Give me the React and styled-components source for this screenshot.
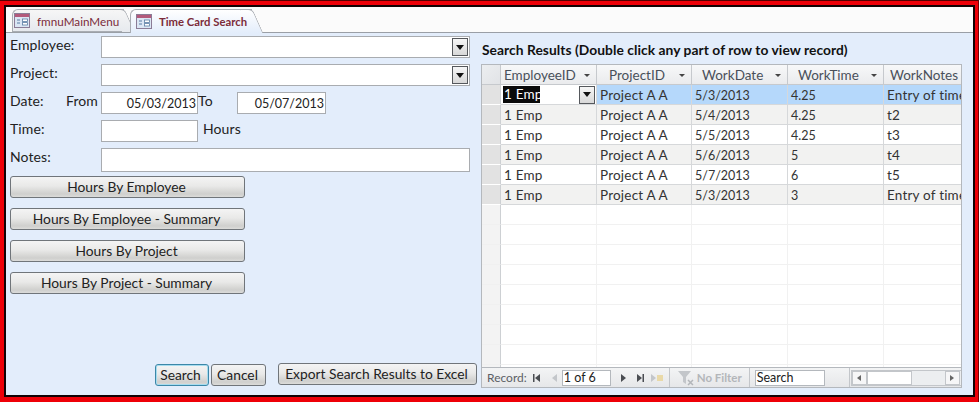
import React from 'react';
import styled, { createGlobalStyle } from 'styled-components';

const Global = createGlobalStyle`
  html, body { margin: 0; padding: 0; background: #e8000a; }
  * { box-sizing: border-box; }
`;

const Frame = styled.div`
  width: 979px;
  height: 402px;
  background: #ee0008;
  padding: 4px 3px 5px 4px;
  font-family: Lato, "Noto Sans", sans-serif;
  font-size: 14px;
  color: #222;
  border-top: 1px solid #500;
  border-right: 1px solid #700;
`;

const Window = styled.div`
  width: 971px;
  height: 392px;
  border: 2px solid #120204;
  display: flex;
  flex-direction: column;
  background: #e3edfb;
  overflow: hidden;
`;

const TabStrip = styled.div`
  height: 26px;
  flex: none;
  display: flex;
  align-items: flex-end;
  gap: 2px;
  padding-left: 6px;
  background: #fbfbfb;
  border-bottom: 1px solid #9a9fa6;
`;

const Tab = styled.div`
  position: relative;
  height: ${p => (p.$active ? 24 : 23)}px;
  width: ${p => (p.$active ? 122 : 112)}px;
  margin-bottom: ${p => (p.$active ? -1 : 0)}px;
  margin-right: ${p => (p.$active ? 0 : 4)}px;
  display: flex;
  align-items: center;
  gap: ${p => (p.$active ? 7 : 7)}px;
  padding-left: ${p => (p.$active ? 5 : 1)}px;
  font-size: ${p => (p.$active ? 11.3 : 11.7)}px;
  font-weight: ${p => (p.$active ? 700 : 400)};
  white-space: nowrap;
  color: #7b2b3a;
  background: ${p => (p.$active ? 'linear-gradient(#fff, #e3edfb)' : 'linear-gradient(#f6f6f6, #e6e9ee)')};
  border: 1px solid #a9adb3;
  border-right: 0;
  border-bottom: ${p => (p.$active ? '0' : '1px solid #a9adb3')};
  border-top-left-radius: 6px;
  z-index: ${p => (p.$active ? 2 : 1)};

  &::after {
    content: '';
    position: absolute;
    top: -1px;
    bottom: ${p => (p.$active ? 0 : -1)}px;
    right: -6px;
    width: 12px;
    background: inherit;
    border-right: 1px solid #a9adb3;
    border-top: 1px solid #a9adb3;
    border-top-right-radius: 5px;
    transform: skewX(24deg);
    z-index: -1;
  }
`;

const Body = styled.div`
  flex: 1;
  display: flex;
  min-height: 0;
`;

const FormPanel = styled.div`
  width: 475px;
  flex: none;
  display: flex;
  flex-direction: column;
  padding: 3px 0 9px 4px;
`;

const FieldRow = styled.div`
  display: flex;
  align-items: flex-start;
  height: ${p => p.$height || 28}px;
`;

const Label = styled.div`
  width: 56px;
  height: 20px;
  line-height: 17px;
  font-size: 14px;
  letter-spacing: 0.1px;
  flex: none;
`;

const SubLabel = styled(Label)`
  width: ${p => p.$width}px;
  padding-left: ${p => p.$pad || 0}px;
`;

const Input = styled.div`
  width: ${p => p.$width}px;
  height: ${p => p.$height || 22}px;
  background: #fff;
  border: 1px solid #a9acb0;
  flex: none;
  display: flex;
  align-items: center;
  justify-content: flex-end;
  padding-right: 1px;
  font-size: 12.5px;
`;

const ComboArrow = styled.div`
  width: 16px;
  height: 18px;
  border: 1px solid #55585c;
  background: linear-gradient(#f6f6f6, #d8d8d8);
  display: flex;
  align-items: center;
  justify-content: center;

  &::after {
    content: '';
    border: 4px solid transparent;
    border-top: 5px solid #111;
    border-bottom: 0;
  }
`;

const Gutter = styled.div`
  width: 35px;
  flex: none;
`;

const ReportList = styled.div`
  display: flex;
  flex-direction: column;
  gap: 10px;
  margin-top: 4px;
`;

const Button = styled.div`
  width: ${p => p.$width || 235}px;
  height: 22px;
  margin-left: ${p => p.$ml || 0}px;
  margin-top: ${p => p.$mt || 0}px;
  padding-bottom: 2px;
  padding-right: ${p => p.$shift || 0}px;
  border: 1px solid ${p => (p.$focused ? '#3c87a8' : '#70757a')};
  border-radius: 3px;
  background: linear-gradient(#f4f4f4 0%, #e9e9e8 45%, #cfcfcd 85%, #dcdcda 100%);
  box-shadow: ${p => (p.$focused ? 'inset 0 0 0 1px #a6dcef' : 'none')};
  display: flex;
  align-items: center;
  justify-content: center;
  font-size: 13.8px;
  flex: none;
`;

const BottomButtons = styled.div`
  margin-top: auto;
  display: flex;
  align-items: flex-start;
  padding-left: 145px;
`;

const ResultsPanel = styled.div`
  flex: 1;
  display: flex;
  flex-direction: column;
  min-width: 0;
  padding-right: 11px;
`;

const ResultsTitle = styled.div`
  height: 31px;
  padding: 8px 0 0 1px;
  font-size: 13.8px;
  letter-spacing: 0.05px;
  font-weight: 700;
  color: #111;
  white-space: nowrap;
`;

const Sheet = styled.div`
  width: 481px;
  height: 324px;
  background: #fff;
  border: 1px solid #b4b8bd;
  display: flex;
  flex-direction: column;
  overflow: hidden;
`;

const SheetRow = styled.div`
  display: grid;
  grid-template-columns: 19px 96px 95px 96px 96px 78px;
  height: 20px;
  flex: none;
  background: ${p => p.$bg || '#fff'};
`;

const HeaderCell = styled.div`
  display: flex;
  align-items: center;
  justify-content: space-between;
  padding: 0 6px 0 ${p => p.$pad}px;
  color: #49505a;
  font-size: 13.5px;
  background: linear-gradient(#f7f8f9, #eaebed);
  border-right: 1px solid #c6c9cd;
  border-bottom: 1px solid #c6c9cd;
  white-space: nowrap;
  overflow: hidden;

  &::after {
    content: ${p => (p.$noArrow ? 'none' : "''")};
    border: 3px solid transparent;
    border-top: 3px solid #444;
    border-bottom: 0;
    margin-top: 2px;
  }
`;

const Corner = styled.div`
  background: linear-gradient(135deg, #eceef0, #e1e3e6);
  border-right: 1px solid #c6c9cd;
  border-bottom: 1px solid #c6c9cd;
`;

const Selector = styled.div`
  background: ${p => (p.$empty ? '#f3f3f3' : '#e2e2e2')};
  border-right: 1px solid #cdd0d3;
  border-bottom: 1px solid ${p => (p.$empty ? '#f0f0f0' : '#fff')};
`;

const Cell = styled.div`
  display: flex;
  align-items: center;
  padding: 1px 0 0 3px;
  border-right: 1px solid ${p => (p.$empty ? '#f1f1f1' : '#d6d8da')};
  border-bottom: 1px solid ${p => (p.$empty ? '#f1f1f1' : '#d6d8da')};
  font-size: ${p => (p.$num ? 12.5 : 13.5)}px;
  letter-spacing: ${p => (p.$num ? 0 : 0.2)}px;
  color: #333;
  white-space: nowrap;
  overflow: hidden;
`;

const ActiveCell = styled(Cell)`
  background: #fff;
  justify-content: space-between;
  padding: 0 1px 0 2px;
  color: #fff;
`;

const Highlighted = styled.span`
  background: #0a0a0a;
  width: 37px;
  height: 17px;
  line-height: 17px;
  padding-left: 1px;
`;

const Filler = styled.div`
  flex: 1;
  min-height: 0;
  overflow: hidden;
`;

const NavBar = styled.div`
  height: 20px;
  flex: none;
  display: flex;
  align-items: center;
  background: linear-gradient(#f3f4f5, #e6e7e9);
  border-top: 1px solid #b4b8bd;
  color: #5c6066;
  font-size: 12px;
`;

const NavLabel = styled.span`
  margin: 0 5px 0 5px;
`;

const NavInput = styled.div`
  width: ${p => p.$width}px;
  height: 16px;
  margin-left: ${p => p.$ml || 0}px;
  background: #fff;
  border: 1px solid #b4b8bd;
  color: #222;
  padding-left: 1px;
  line-height: 14px;
  font-size: 12.5px;
  flex: none;
`;

const NavIcon = styled.svg`
  width: ${p => p.$w || 10}px;
  height: ${p => p.$h || 10}px;
  margin-left: ${p => p.$ml || 0}px;
  flex: none;
  fill: ${p => (p.$dim ? '#c3c6ca' : '#4a4d52')};
`;

const NavDivider = styled.div`
  width: 1px;
  height: 19px;
  background: #c3c6ca;
  margin-left: ${p => p.$ml || 0}px;
  margin-right: ${p => p.$mr || 0}px;
  flex: none;
`;

const NoFilter = styled.span`
  color: #b3b6ba;
  font-weight: 700;
  font-size: 11.5px;
  margin-left: 2px;
  white-space: nowrap;
  width: 42px;
  flex: none;
  overflow: visible;
`;

const ScrollTrack = styled.div`
  width: 111px;
  height: 16px;
  margin-left: 1px;
  flex: none;
  display: flex;
  align-items: center;
  background: #eceef0;
  border: 1px solid #c3c6ca;
`;

const ScrollButton = styled.div`
  width: 15px;
  height: 14px;
  flex: none;
  display: flex;
  align-items: center;
  justify-content: center;
  background: #f6f6f7;
  border: 1px solid #c3c6ca;
  margin-left: ${p => (p.$auto ? 'auto' : '0')};
  margin-right: ${p => (p.$auto ? '1px' : '0')};

  &::after {
    content: '';
    border: 3.5px solid transparent;
    border-left: ${p => (p.$dir === 'right' ? '4px solid #666' : '0')};
    border-right: ${p => (p.$dir === 'left' ? '4px solid #666' : '0')};
  }
`;

const ScrollThumb = styled.div`
  width: 45px;
  height: 14px;
  background: #fff;
  border: 1px solid #c3c6ca;
  flex: none;
`;

const FormIcon = () => (
  <svg width="16" height="15" viewBox="0 0 16 15">
    <rect x="0.5" y="0.5" width="15" height="14" fill="#dbe6f4" stroke="#8b7c96" />
    <rect x="1" y="1" width="14" height="3" fill="#b35a7c" />
    <path d="M3 7h3M3 10h3" stroke="#5a7da3" strokeWidth="1" />
    <rect x="8.5" y="6" width="5" height="2.4" fill="#fff" stroke="#5a7da3" strokeWidth="0.8" />
    <rect x="8.5" y="9.6" width="5" height="2.4" fill="#fff" stroke="#5a7da3" strokeWidth="0.8" />
  </svg>
);

const rows = [
  ['5/3/2013', '4.25', 'Entry of time'],
  ['5/4/2013', '4.25', 't2'],
  ['5/5/2013', '4.25', 't3'],
  ['5/6/2013', '5', 't4'],
  ['5/7/2013', '6', 't5'],
  ['5/3/2013', '3', 'Entry of time'],
];

const reports = ['Hours By Employee', 'Hours By Employee - Summary', 'Hours By Project', 'Hours By Project - Summary'];

const rowColor = i => (i === 0 ? '#b5d8fb' : i % 2 ? '#f2f2f1' : '#fff');

export default function App() {
  return (
    <Frame>
      <Global />
      <Window>
        <TabStrip>
          <Tab><FormIcon />fmnuMainMenu</Tab>
          <Tab $active><FormIcon />Time Card Search</Tab>
        </TabStrip>
        <Body>
          <FormPanel>
            <FieldRow>
              <Label>Employee:</Label><Gutter />
              <Input $width={369}><ComboArrow /></Input>
            </FieldRow>
            <FieldRow>
              <Label>Project:</Label><Gutter />
              <Input $width={369}><ComboArrow /></Input>
            </FieldRow>
            <FieldRow>
              <Label>Date:</Label>
              <SubLabel $width={35}>From</SubLabel>
              <Input $width={97}>05/03/2013</Input>
              <SubLabel $width={39}>To</SubLabel>
              <Input $width={89}>05/07/2013</Input>
            </FieldRow>
            <FieldRow>
              <Label>Time:</Label><Gutter />
              <Input $width={97} />
              <SubLabel $width={50} $pad={5}>Hours</SubLabel>
            </FieldRow>
            <FieldRow $height={24}>
              <Label>Notes:</Label><Gutter />
              <Input $width={369} $height={24} />
            </FieldRow>
            <ReportList>
              {reports.map(r => <Button key={r} $shift={2}>{r}</Button>)}
            </ReportList>
            <BottomButtons>
              <Button $width={54} $focused $shift={3}>Search</Button>
              <Button $width={55} $ml={2} $shift={2}>Cancel</Button>
              <Button $width={199} $ml={12} $mt={-1} $shift={2}>Export Search Results to Excel</Button>
            </BottomButtons>
          </FormPanel>
          <ResultsPanel>
            <ResultsTitle>Search Results (Double click any part of row to view record)</ResultsTitle>
            <Sheet>
              <SheetRow>
                <Corner />
                <HeaderCell $pad={3}>EmployeeID</HeaderCell>
                <HeaderCell $pad={12}>ProjectID</HeaderCell>
                <HeaderCell $pad={10}>WorkDate</HeaderCell>
                <HeaderCell $pad={10}>WorkTime</HeaderCell>
                <HeaderCell $pad={6} $noArrow>WorkNotes</HeaderCell>
              </SheetRow>
              {rows.map((r, i) => (
                <SheetRow key={i} $bg={rowColor(i)}>
                  <Selector />
                  {i === 0 ? (
                    <ActiveCell><Highlighted>1 Emp</Highlighted><ComboArrow /></ActiveCell>
                  ) : (
                    <Cell>1 Emp</Cell>
                  )}
                  <Cell>Project A A</Cell>
                  <Cell $num>{r[0]}</Cell>
                  <Cell $num>{r[1]}</Cell>
                  <Cell>{r[2]}</Cell>
                </SheetRow>
              ))}
              <Filler>
                {Array.from({ length: 9 }, (_, i) => (
                  <SheetRow key={i}>
                    <Selector $empty />
                    <Cell $empty /><Cell $empty /><Cell $empty /><Cell $empty /><Cell $empty />
                  </SheetRow>
                ))}
              </Filler>
              <NavBar>
                <NavLabel>Record:</NavLabel>
                <NavIcon viewBox="0 0 10 10"><path d="M1 1h1.5v8H1zM8 1v8L3 5z" /></NavIcon>
                <NavIcon viewBox="0 0 10 10" $ml={8} $dim><path d="M7 1v8L2 5z" /></NavIcon>
                <NavInput $width={49} $ml={2}>1 of 6</NavInput>
                <NavIcon viewBox="0 0 10 10" $ml={7}><path d="M3 1v8l5-4z" /></NavIcon>
                <NavIcon viewBox="0 0 10 10" $ml={7}><path d="M2 1v8l5-4zM7.5 1H9v8H7.5z" /></NavIcon>
                <NavIcon viewBox="0 0 14 10" $w={14} $ml={5} $dim><path d="M1 1v8l5-4z" /><path d="M7 2h6v6H7z" fill="#e9d9a8" /></NavIcon>
                <NavDivider $ml={5} $mr={8} />
                <NavIcon viewBox="0 0 17 16" $w={17} $h={16} $dim>
                  <path d="M0 1h13L8 7v7L5 12V7z" />
                  <path d="M10 10l5 5M15 10l-5 5" stroke="#b3b6ba" strokeWidth="1.5" />
                </NavIcon>
                <NoFilter>No Filter</NoFilter>
                <NavDivider $ml={10} $mr={5} />
                <NavInput $width={70}>Search</NavInput>
                <NavDivider $ml={24} />
                <ScrollTrack>
                  <ScrollButton $dir="left" />
                  <ScrollThumb />
                  <ScrollButton $dir="right" $auto />
                </ScrollTrack>
              </NavBar>
            </Sheet>
          </ResultsPanel>
        </Body>
      </Window>
    </Frame>
  );
}
